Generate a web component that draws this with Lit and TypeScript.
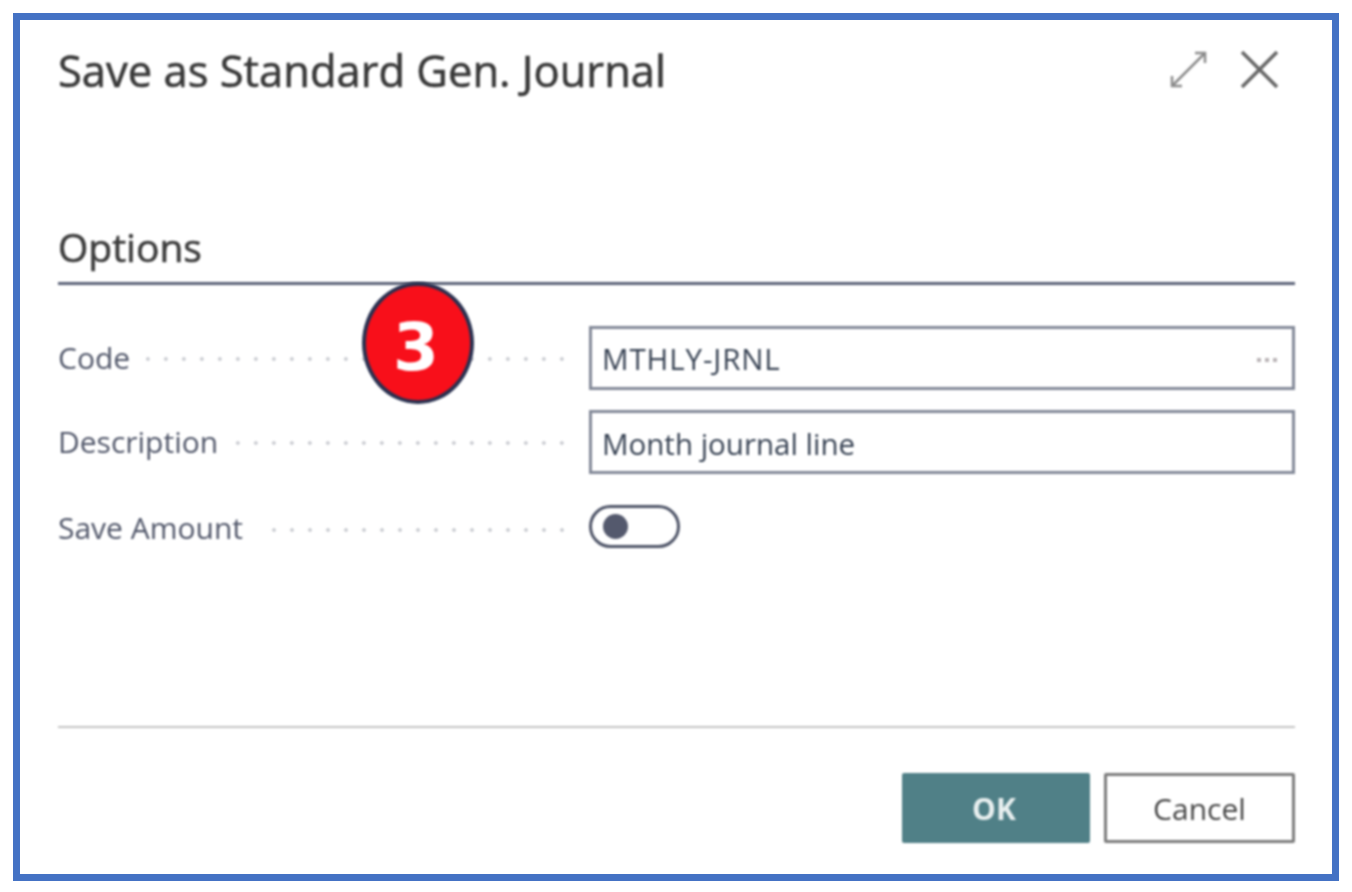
import { LitElement, html, css } from 'lit';
import { customElement } from 'lit/decorators.js';

@customElement('app-root')
export class AppRoot extends LitElement {
  static styles = css`
    :host {
      display: block;
      width: 1352px;
      height: 892px;
      background: #fff;
      padding: 13px 13px 11px 13px;
      box-sizing: border-box;
      font-family: 'Open Sans', 'Noto Sans', sans-serif;
      color: #4a4a4a;
    }

    .frame {
      position: relative;
      box-sizing: border-box;
      width: 1326px;
      height: 868px;
      border: 7px solid #4472c4;
      padding: 0 37px 0 38px;
      display: flex;
      flex-direction: column;
    }

    .content {
      display: flex;
      flex-direction: column;
      filter: blur(0.8px);
    }

    .header {
      display: flex;
      align-items: center;
      justify-content: space-between;
      height: 104px;
    }

    .title {
      font-size: 43.5px;
      line-height: 102px;
      padding-bottom: 2px;
      color: #383838;
      -webkit-text-stroke: 0.6px #383838;
    }

    .window-btns {
      display: flex;
      align-items: center;
      gap: 33px;
      padding: 0 16px 6px 0;
    }

    .window-btns svg {
      display: block;
      fill: none;
    }

    .section {
      margin-top: 88px;
      height: 73px;
      box-sizing: border-box;
      border-bottom: 3px solid #5c6378;
      font-size: 39px;
      line-height: 70px;
      color: #3c3c3c;
      -webkit-text-stroke: 0.6px #3c3c3c;
    }

    .rows {
      display: flex;
      flex-direction: column;
      margin-top: 41px;
    }

    .row {
      display: grid;
      grid-template-columns: 531px 1fr;
      align-items: center;
      height: 64px;
      margin-bottom: 20px;
    }

    .row.toggle-row {
      height: 43px;
      margin-top: 11px;
      margin-bottom: 0;
    }

    .label {
      display: flex;
      align-items: center;
      gap: 16px;
      padding: 0 18px 2px 0;
      font-size: 30px;
      color: #505669;
    }

    .toggle-row .label {
      padding: 2px 18px 0 0;
      gap: 26px;
    }

    .dots {
      flex: 1;
      height: 4px;
      margin-top: 4px;
      background-image: radial-gradient(circle, #c6c8ce 1.5px, transparent 2px);
      background-size: 18px 4px;
      background-position: right center;
    }

    .input {
      box-sizing: border-box;
      height: 64px;
      border: 3px solid #838998;
      padding: 3px 10px 0;
      display: flex;
      align-items: center;
      justify-content: space-between;
      font-size: 29.5px;
      color: #364152;
    }

    .code-value {
      letter-spacing: 0.9px;
      margin-top: -3px;
    }

    .more {
      display: flex;
      gap: 4px;
      padding-right: 5px;
    }

    .more i {
      width: 4px;
      height: 4px;
      background: #b8b3b5;
    }

    .toggle {
      box-sizing: border-box;
      width: 91px;
      height: 43px;
      border: 3px solid #4f5568;
      border-radius: 22px;
      display: flex;
      align-items: center;
      padding-left: 11px;
    }

    .knob {
      width: 25px;
      height: 25px;
      border-radius: 50%;
      background: #54596d;
    }

    .footer {
      margin-top: 178px;
      border-top: 2px solid #c4c4c4;
      display: flex;
      justify-content: flex-end;
      gap: 14px;
      padding-top: 45px;
    }

    .btn {
      box-sizing: border-box;
      height: 70px;
      display: flex;
      align-items: center;
      justify-content: center;
      font-size: 30px;
      border-radius: 2px;
    }

    .ok {
      width: 188px;
      background: #508087;
      color: #e8efef;
      font-weight: 700;
      padding-right: 4px;
    }

    .cancel {
      width: 191px;
      border: 3px solid #7c7c7c;
      color: #454545;
      background: #fff;
    }

    .badge {
      position: absolute;
      left: 342px;
      top: 262px;
      box-sizing: border-box;
      width: 112px;
      height: 122px;
      border-radius: 50%;
      background: #f80f1a;
      border: 4px solid #2a3150;
      color: #fff;
      font-family: 'DejaVu Sans', sans-serif;
      font-size: 66px;
      font-weight: 700;
      padding: 8px 4px 0 0;
      display: flex;
      align-items: center;
      justify-content: center;
      filter: blur(0.9px);
    }
  `;

  render() {
    return html`
      <div class="frame">
        <div class="content">
          <div class="header">
            <div class="title">Save as Standard Gen. Journal</div>
            <div class="window-btns">
              <svg width="37" height="37" viewBox="0 0 37 37" stroke="#8c8c8c" stroke-width="2.5">
                <path d="M2 35 L35 2 M25 2 H35 V12 M2 25 V35 H12" />
              </svg>
              <svg width="39" height="39" viewBox="0 0 39 39" stroke="#666" stroke-width="3.5">
                <path d="M2 2 L37 37 M37 2 L2 37" />
              </svg>
            </div>
          </div>

          <div class="section">Options</div>

          <div class="rows">
            <div class="row">
              <div class="label"><span>Code</span><span class="dots"></span></div>
              <div class="input">
                <span class="code-value">MTHLY-JRNL</span>
                <span class="more"><i></i><i></i><i></i></span>
              </div>
            </div>
            <div class="row">
              <div class="label"><span>Description</span><span class="dots"></span></div>
              <div class="input"><span>Month journal line</span></div>
            </div>
            <div class="row toggle-row">
              <div class="label"><span>Save Amount</span><span class="dots"></span></div>
              <div class="toggle"><span class="knob"></span></div>
            </div>
          </div>

          <div class="footer">
            <div class="btn ok">OK</div>
            <div class="btn cancel">Cancel</div>
          </div>
        </div>

        <div class="badge">3</div>
      </div>
    `;
  }
}
